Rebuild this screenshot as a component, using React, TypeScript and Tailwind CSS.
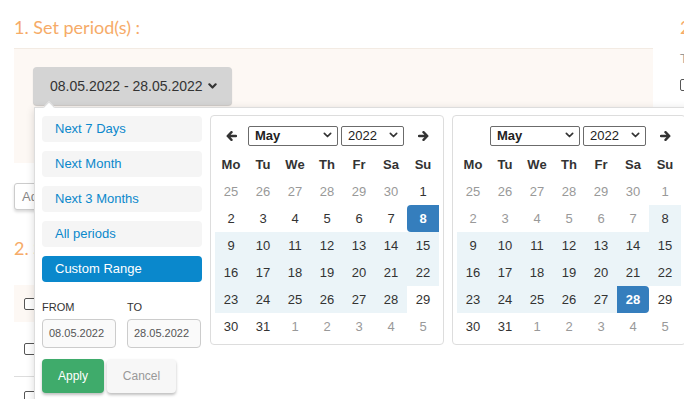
import type { ReactNode } from "react";

type Cell = { d: number; off?: boolean; range?: boolean; start?: boolean; end?: boolean };

const dayNames = ["Mo", "Tu", "We", "Th", "Fr", "Sa", "Su"];
const ranges = ["Next 7 Days", "Next Month", "Next 3 Months", "All periods"];

function buildMonth(side: "left" | "right"): Cell[] {
  const cells: Cell[] = [];
  for (let d = 25; d <= 30; d++) cells.push({ d, off: true });
  for (let d = 1; d <= 31; d++) {
    if (side === "left") {
      cells.push({ d, start: d === 8, range: d > 8 && d <= 28 });
    } else {
      cells.push({ d, off: d < 8, range: d >= 8 && d < 28, end: d === 28 });
    }
  }
  for (let d = 1; d <= 5; d++) cells.push({ d, off: true });
  return cells;
}

function Arrow({ dir }: { dir: "left" | "right" }) {
  return (
    <svg
      width="11"
      height="10"
      viewBox="0 0 11 10"
      className={dir === "right" ? "rotate-180" : ""}
    >
      <path
        d="M10 5H2M5.5 1.2L1.7 5l3.8 3.8"
        fill="none"
        stroke="#333"
        strokeWidth="2.4"
        strokeLinecap="round"
        strokeLinejoin="round"
      />
    </svg>
  );
}

function Chevron({ w = 9, stroke = 2.2 }: { w?: number; stroke?: number }) {
  return (
    <svg width={w} height={w * 0.7} viewBox="0 0 10 7">
      <path
        d="M1.5 1.5L5 5l3.5-3.5"
        fill="none"
        stroke="#333"
        strokeWidth={stroke}
        strokeLinecap="round"
        strokeLinejoin="round"
      />
    </svg>
  );
}

function FakeSelect({ value, width, bold }: { value: string; width: string; bold?: boolean }) {
  return (
    <div
      className={`flex h-[20px] items-center justify-between rounded-[2px] border border-[#6b6b6b] bg-white pr-[5px] pl-[6px] text-[13px] text-[#222] ${width} ${bold ? "font-bold" : ""}`}
    >
      <span>{value}</span>
      <Chevron w={9} stroke={1.9} />
    </div>
  );
}

function Calendar({ side }: { side: "left" | "right" }) {
  const cells = buildMonth(side);
  return (
    <div className="w-[234px] shrink-0 rounded-[4px] border border-[#ddd] bg-white p-[4px]">
      <div className="flex h-[31px] items-center">
        <div className="flex w-[32px] justify-center">
          {side === "left" && <Arrow dir="left" />}
        </div>
        <div className="flex w-[160px] items-center gap-[3px] pl-[1px]">
          <FakeSelect value="May" width="w-[90px]" bold />
          <FakeSelect value="2022" width="w-[63px]" />
        </div>
        <div className="flex w-[32px] justify-center">
          <Arrow dir="right" />
        </div>
      </div>
      <div className="grid grid-cols-[repeat(7,32px)]">
        {dayNames.map((n) => (
          <div
            key={n}
            className="flex h-[27px] items-center justify-center text-[13px] font-bold text-[#333]"
          >
            {n}
          </div>
        ))}
        {cells.map((c, i) => {
          let cls = "text-[#333]";
          if (c.off) cls = "text-[#999]";
          if (c.range) cls = "bg-[#ebf4f8] text-[#333]";
          if (c.start) cls = "rounded-l-[4px] bg-[#357ebd] font-bold text-white";
          if (c.end) cls = "rounded-r-[4px] bg-[#357ebd] font-bold text-white";
          return (
            <div
              key={i}
              className={`flex h-[27px] items-center justify-center text-[13px] ${cls}`}
            >
              {c.d}
            </div>
          );
        })}
      </div>
    </div>
  );
}

function Checkbox() {
  return <div className="h-[12px] w-[12px] rounded-[2px] border border-[#555] bg-white" />;
}

function Heading({ children }: { children: ReactNode }) {
  return (
    <h2 className="font-['Lato','Liberation_Sans',sans-serif] text-[18px] leading-[24px] font-normal text-[#f6ab68]">
      {children}
    </h2>
  );
}

function RangePicker() {
  return (
    <div className="absolute top-[107px] left-[34px] flex w-[720px] items-start gap-[8px] border border-[#ddd] bg-white p-[7px] shadow-[0_2px_8px_rgba(0,0,0,0.15)]">
      <div className="absolute top-[-5px] left-[10px] h-[8px] w-[8px] rotate-45 border-t border-l border-[#ddd] bg-white" />
      <div className="w-[160px] shrink-0 pt-[1px]">
        <div className="flex flex-col gap-[9px]">
          {ranges.map((r) => (
            <div
              key={r}
              className="flex h-[26px] items-center rounded-[4px] bg-[#f5f5f5] px-[13px] text-[13px] text-[#0a88cc]"
            >
              {r}
            </div>
          ))}
          <div className="flex h-[26px] items-center rounded-[4px] bg-[#0a88cc] px-[13px] text-[13px] text-white">
            Custom Range
          </div>
        </div>
        <div className="mt-[18px] flex gap-[11px]">
          {[
            ["FROM", "08.05.2022"],
            ["TO", "28.05.2022"],
          ].map(([label, value]) => (
            <div key={label} className="w-[74px]">
              <div className="h-[14px] text-[11px] leading-[14px] text-[#333]">{label}</div>
              <div className="mt-[5px] flex h-[29px] items-center rounded-[4px] border border-[#ccc] bg-[#fafafa] px-[6px] text-[11px] text-[#555]">
                {value}
              </div>
            </div>
          ))}
        </div>
        <div className="mt-[11px] flex gap-[3px] pb-[10px]">
          <button className="h-[34px] w-[62px] rounded-[4px] bg-[#3fab6b] text-[12px] text-white shadow-[0_2px_3px_rgba(0,0,0,0.25)]">
            Apply
          </button>
          <button className="h-[34px] w-[69px] rounded-[4px] bg-[#f7f7f7] text-[12px] text-[#999] shadow-[0_2px_3px_rgba(0,0,0,0.25)]">
            Cancel
          </button>
        </div>
      </div>
      <Calendar side="left" />
      <Calendar side="right" />
    </div>
  );
}

export default function App() {
  return (
    <div className="relative h-[399px] w-[684px] overflow-hidden bg-white font-['Liberation_Sans',Arial,sans-serif]">
      <div className="flex gap-[27px] pl-[14px]">
        <div className="w-[639px] shrink-0">
          <div className="pt-[15px] pb-[9px]">
            <Heading>1. Set period(s) :</Heading>
          </div>
          <div className="h-[115px] border-t border-[#f3ebe3] bg-[#fdf8f4] px-[19px] pt-[18px]">
            <button className="flex h-[38px] w-[199px] items-center gap-[5px] rounded-[4px] bg-[#d4d4d4] pl-[17px] text-[14px] text-[#333] shadow-[0_1px_1px_rgba(0,0,0,0.2)]">
              08.05.2022 - 28.05.2022
              <Chevron w={9} stroke={2.4} />
            </button>
          </div>
          <button className="mt-[20px] h-[27px] w-[100px] rounded-[3px] border border-[#ccc] bg-white px-[7px] text-left text-[13px] text-[#888] shadow-[0_2px_3px_rgba(0,0,0,0.15)]">
            Add period
          </button>
          <div className="mt-[26px]">
            <Heading>2. Select products :</Heading>
          </div>
          <div className="mt-[25px] flex h-[37px] items-center bg-[#fdf8f4] pl-[10px]">
            <Checkbox />
          </div>
          <div className="flex h-[55px] items-center border-b border-[#ddd] pl-[10px]">
            <Checkbox />
          </div>
          <div className="flex pt-[14px] pl-[10px]">
            <Checkbox />
          </div>
        </div>
        <div className="w-[200px] shrink-0">
          <div className="pt-[15px]">
            <Heading>2. Options :</Heading>
          </div>
          <div className="mt-[10px] text-[13px] text-[#999]">Type</div>
          <div className="mt-[10px]">
            <Checkbox />
          </div>
        </div>
      </div>
      <RangePicker />
    </div>
  );
}
